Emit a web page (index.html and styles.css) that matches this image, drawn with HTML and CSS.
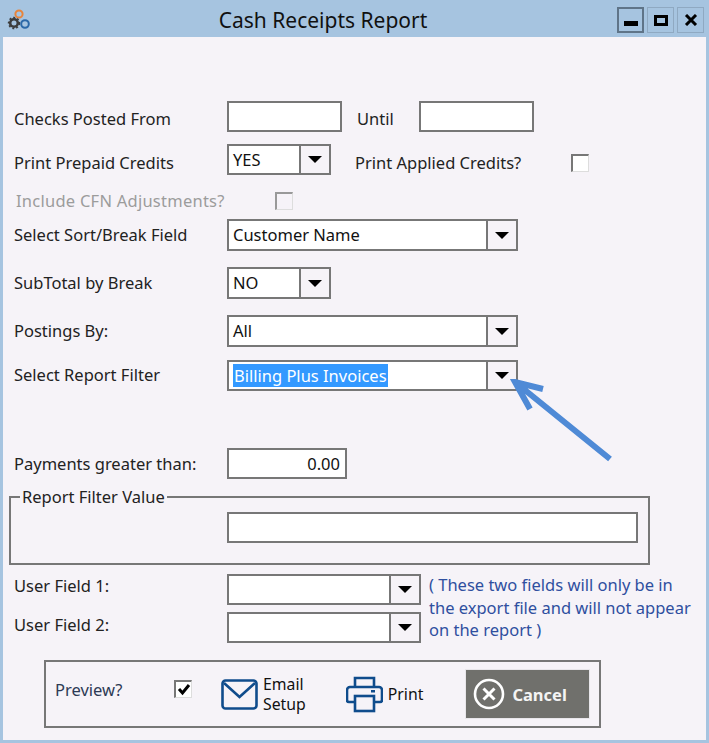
FILE: index.html
```html
<!DOCTYPE html>
<html lang="en">
<head>
    <meta charset="UTF-8">
    <title>Cash Receipts Report</title>
    <link rel="stylesheet" href="styles.css">
</head>
<body>
<div class="window">
    <header class="titlebar">
        <svg class="app-icon" width="26" height="22" viewBox="0 0 26 22">
            <circle cx="15" cy="6" r="3.6" fill="none" stroke="#e8843a" stroke-width="2"/>
            <circle cx="10" cy="15" r="3.8" fill="none" stroke="#3c3c3c" stroke-width="2.6"/>
            <circle cx="10" cy="15" r="5.4" fill="none" stroke="#3c3c3c" stroke-width="1.6" stroke-dasharray="2 2"/>
            <circle cx="21" cy="16" r="3.8" fill="none" stroke="#2a68a8" stroke-width="2"/>
        </svg>
        <h1>Cash Receipts Report</h1>
        <div class="win-buttons">
            <div class="win-btn active"><span class="glyph-min"></span></div>
            <div class="win-btn"><span class="glyph-max"></span></div>
            <div class="win-btn">
                <svg width="14" height="12" viewBox="0 0 14 12"><path d="M2 1l10 10M12 1L2 11" stroke="#000" stroke-width="3"/></svg>
            </div>
        </div>
    </header>

    <form class="form">
        <div class="row row-checks">
            <label class="label">Checks Posted From</label>
            <input class="text from" type="text">
            <label class="until">Until</label>
            <input class="text from" type="text">
        </div>
        <div class="row row-prepaid">
            <label class="label">Print Prepaid Credits</label>
            <div class="combo short"><span class="value">YES</span><span class="arrow"></span></div>
            <label class="applied">Print Applied Credits?</label>
            <span class="check"></span>
        </div>
        <div class="row row-cfn">
            <label class="label disabled">Include CFN Adjustments?</label>
            <span class="check off"></span>
        </div>
        <div class="row row-sort">
            <label class="label">Select Sort/Break Field</label>
            <div class="combo wide"><span class="value">Customer Name</span><span class="arrow"></span></div>
        </div>
        <div class="row row-subtotal">
            <label class="label">SubTotal by Break</label>
            <div class="combo short"><span class="value">NO</span><span class="arrow"></span></div>
        </div>
        <div class="row row-postings">
            <label class="label">Postings By:</label>
            <div class="combo wide"><span class="value">All</span><span class="arrow"></span></div>
        </div>
        <div class="row row-filter">
            <label class="label">Select Report Filter</label>
            <div class="combo wide"><span class="value"><span class="selected">Billing Plus Invoices</span></span><span class="arrow"></span></div>
            <svg class="pointer" width="110" height="90" viewBox="0 0 110 90">
                <path d="M101 80L6 3M34 10L6 3l15 27" fill="none" stroke="#4f8ad6" stroke-width="6"/>
            </svg>
        </div>
        <div class="row row-payments">
            <label class="label">Payments greater than:</label>
            <input class="text amount" type="text" value="0.00">
        </div>

        <fieldset class="group">
            <legend>Report Filter Value</legend>
            <input class="text filter-value" type="text">
        </fieldset>

        <div class="user-fields">
            <div class="user-rows">
                <div class="row user-one">
                    <label class="label">User Field 1:</label>
                    <div class="combo medium"><span class="value"></span><span class="arrow"></span></div>
                </div>
                <div class="row user-two">
                    <label class="label">User Field 2:</label>
                    <div class="combo medium"><span class="value"></span><span class="arrow"></span></div>
                </div>
            </div>
            <p class="note">( These two fields will only be in the export file and will not appear on the report )</p>
        </div>

        <div class="actions">
            <label class="preview">Preview?</label>
            <span class="check checked">
                <svg width="14" height="13" viewBox="0 0 14 13"><path d="M2 6l3.5 4L12 2" fill="none" stroke="#000" stroke-width="3"/></svg>
            </span>
            <div class="action email">
                <svg width="37" height="31" viewBox="0 0 37 31">
                    <rect x="1.5" y="1.5" width="34" height="28" rx="3" fill="none" stroke="#0f4c8c" stroke-width="2.6"/>
                    <path d="M3 4l15.500 14L34 4" fill="none" stroke="#0f4c8c" stroke-width="2.6"/>
                </svg>
                <span>Email<br>Setup</span>
            </div>
            <div class="action print">
                <svg width="37" height="37" viewBox="0 0 37 37">
                    <path d="M9 11V2h19v9M9 26H3a2 2 0 0 1-2-2V14a3 3 0 0 1 3-3h29a3 3 0 0 1 3 3v10a2 2 0 0 1-2 2h-6" fill="none" stroke="#0f4c8c" stroke-width="2.6"/>
                    <rect x="9" y="20" width="19" height="15" fill="none" stroke="#0f4c8c" stroke-width="2.6"/>
                    <rect x="25" y="14" width="4" height="2.500" fill="#0f4c8c"/>
                </svg>
                <span>Print</span>
            </div>
            <button class="cancel" type="button">
                <svg width="32" height="32" viewBox="0 0 32 32">
                    <circle cx="16" cy="16" r="14" fill="none" stroke="#fff" stroke-width="2.6"/>
                    <path d="M10.500 10.500l11 11M21.500 10.500l-11 11" stroke="#fff" stroke-width="3"/>
                </svg>
                Cancel
            </button>
        </div>
    </form>
</div>
</body>
</html>
```

FILE: styles.css
```css
html, body {
    height: 100%;
}

body {
    margin: 0;
    font-family: "Noto Sans", "Open Sans", sans-serif;
    font-size: 16.5px;
    color: #222;
    background-color: #a6c4e0;
    overflow: hidden;
}

.window {
    display: flex;
    flex-direction: column;
    width: 709px;
    height: 743px;
}

.titlebar {
    display: flex;
    align-items: center;
    justify-content: center;
    position: relative;
    height: 37px;
    flex: none;
    padding-right: 63px;
}

.titlebar h1 {
    margin: 3px 0 0;
    font-size: 21px;
    font-weight: 400;
    color: #111;
}

.app-icon {
    position: absolute;
    left: 4px;
    top: 8px;
}

.win-buttons {
    position: absolute;
    right: 5px;
    top: 7px;
    display: flex;
    gap: 3px;
}

.win-btn {
    display: flex;
    align-items: center;
    justify-content: center;
    box-sizing: border-box;
    width: 27px;
    height: 26px;
    border: 1px solid #8fa9c2;
}

.win-btn.active {
    border: 2px solid #5f7488;
}

.glyph-min {
    width: 14px;
    height: 5px;
    margin-top: 7px;
    background-color: #000;
}

.glyph-max {
    box-sizing: border-box;
    width: 14px;
    height: 11px;
    border: 3px solid #000;
}

.form {
    flex: 1;
    margin: 0 3px 3px;
    padding: 64px 0 0 11px;
    background-color: #f6f3f8;
}

.row {
    display: flex;
    align-items: center;
    position: relative;
}

.row-prepaid { margin-top: 12px; }
.row-cfn { margin-top: 17px; height: 18px; }
.row-sort { margin-top: 9px; }
.row-subtotal { margin-top: 16px; }
.row-postings { margin-top: 16px; }
.row-filter { margin-top: 13px; }
.row-payments { margin-top: 57px; }

.label {
    flex: none;
    width: 213px;
}

.row-checks .label { padding-top: 4px; }
.row-prepaid .label { padding-top: 6px; }
.row-cfn .label { padding-bottom: 2px; }
.row-sort .label,
.row-subtotal .label,
.row-postings .label { padding-bottom: 2px; }
.row-filter .label { padding-bottom: 2px; }
.user-one .label { padding-bottom: 8px; }
.user-two .label { padding-bottom: 6px; }

.label.disabled {
    padding-left: 2px;
    width: 211px;
    color: #9c9c9c;
    letter-spacing: 0.25px;
}

.text {
    box-sizing: border-box;
    height: 31px;
    margin: 0;
    padding: 0 5px;
    font: inherit;
    color: #111;
    background-color: #fff;
    border: 2px solid #777;
    outline: none;
}

.from {
    width: 115px;
}

.until {
    margin: 0 26px 0 15px;
    padding-top: 4px;
    width: 36px;
}

.amount {
    width: 120px;
    text-align: right;
}

.combo {
    display: flex;
    box-sizing: border-box;
    height: 32px;
    background-color: #fff;
    border: 2px solid #777;
}

.row-prepaid .combo,
.row-filter .combo,
.user-rows .combo {
    height: 31px;
}

.short { width: 104px; }
.wide { width: 291px; }
.medium { width: 194px; }

.value {
    flex: 1;
    padding-left: 4px;
    line-height: 28px;
    color: #111;
}

.selected {
    display: inline-block;
    padding: 0 1px;
    line-height: 23px;
    color: #fff;
    background-color: #3399ff;
}

.arrow {
    display: flex;
    align-items: center;
    justify-content: center;
    flex: none;
    width: 28px;
    background-color: #f6f3f8;
    border-left: 2px solid #777;
}

.arrow::after {
    content: "";
    border-style: solid;
    border-width: 7px 7px 0;
    border-color: #000 transparent transparent;
}

.applied {
    margin-left: 24px;
    padding-top: 5px;
    width: 216px;
}

.check {
    display: flex;
    align-items: center;
    justify-content: center;
    box-sizing: border-box;
    width: 18px;
    height: 18px;
    background-color: #fff;
    border: 2px solid #777;
    border-right: 1px solid #ddd;
    border-bottom: 1px solid #ddd;
}

.row-prepaid .check {
    margin-top: 6px;
}

.check.off {
    margin-left: 48px;
    background-color: #f6f3f8;
    border-color: #999 #ddd #ddd #999;
}

.pointer {
    position: absolute;
    left: 495px;
    top: 19px;
}

.group {
    box-sizing: border-box;
    display: flex;
    align-items: flex-start;
    justify-content: flex-end;
    width: 641px;
    height: 78px;
    margin: 8px 0 0 -5px;
    padding: 5px 10px 0 0;
    border: 2px solid #777;
}

.group legend {
    margin-left: 9px;
    padding: 0 2px;
    line-height: 20px;
}

.filter-value {
    width: 411px;
}

.user-fields {
    display: flex;
    margin-top: 9px;
}

.user-rows {
    display: flex;
    flex-direction: column;
    gap: 7px;
}

.note {
    width: 268px;
    margin: 0 0 0 8px;
    font-size: 16.5px;
    line-height: 22.5px;
    color: #2f4f9f;
}

.actions {
    display: flex;
    align-items: center;
    box-sizing: border-box;
    width: 557px;
    height: 68px;
    margin: 17px 0 0 30px;
    padding-left: 9px;
    border: 2px solid #777;
}

.preview {
    width: 119px;
    margin-bottom: 10px;
    color: #2d3a55;
}

.checked {
    margin-bottom: 10px;
}

.action {
    display: flex;
    align-items: center;
    font-size: 15.8px;
    color: #111;
}

.email {
    margin-left: 29px;
    gap: 5px;
    line-height: 20px;
}

.print {
    margin-left: 40px;
    gap: 5px;
}

.cancel {
    display: flex;
    flex: none;
    align-items: center;
    gap: 7px;
    box-sizing: border-box;
    width: 125px;
    height: 50px;
    margin: 0 0 0 42px;
    padding: 0 0 0 7px;
    font: inherit;
    font-weight: 700;
    color: #f4f4f4;
    background-color: #70706c;
    border: 1px solid #e8e6ea;
}
```
